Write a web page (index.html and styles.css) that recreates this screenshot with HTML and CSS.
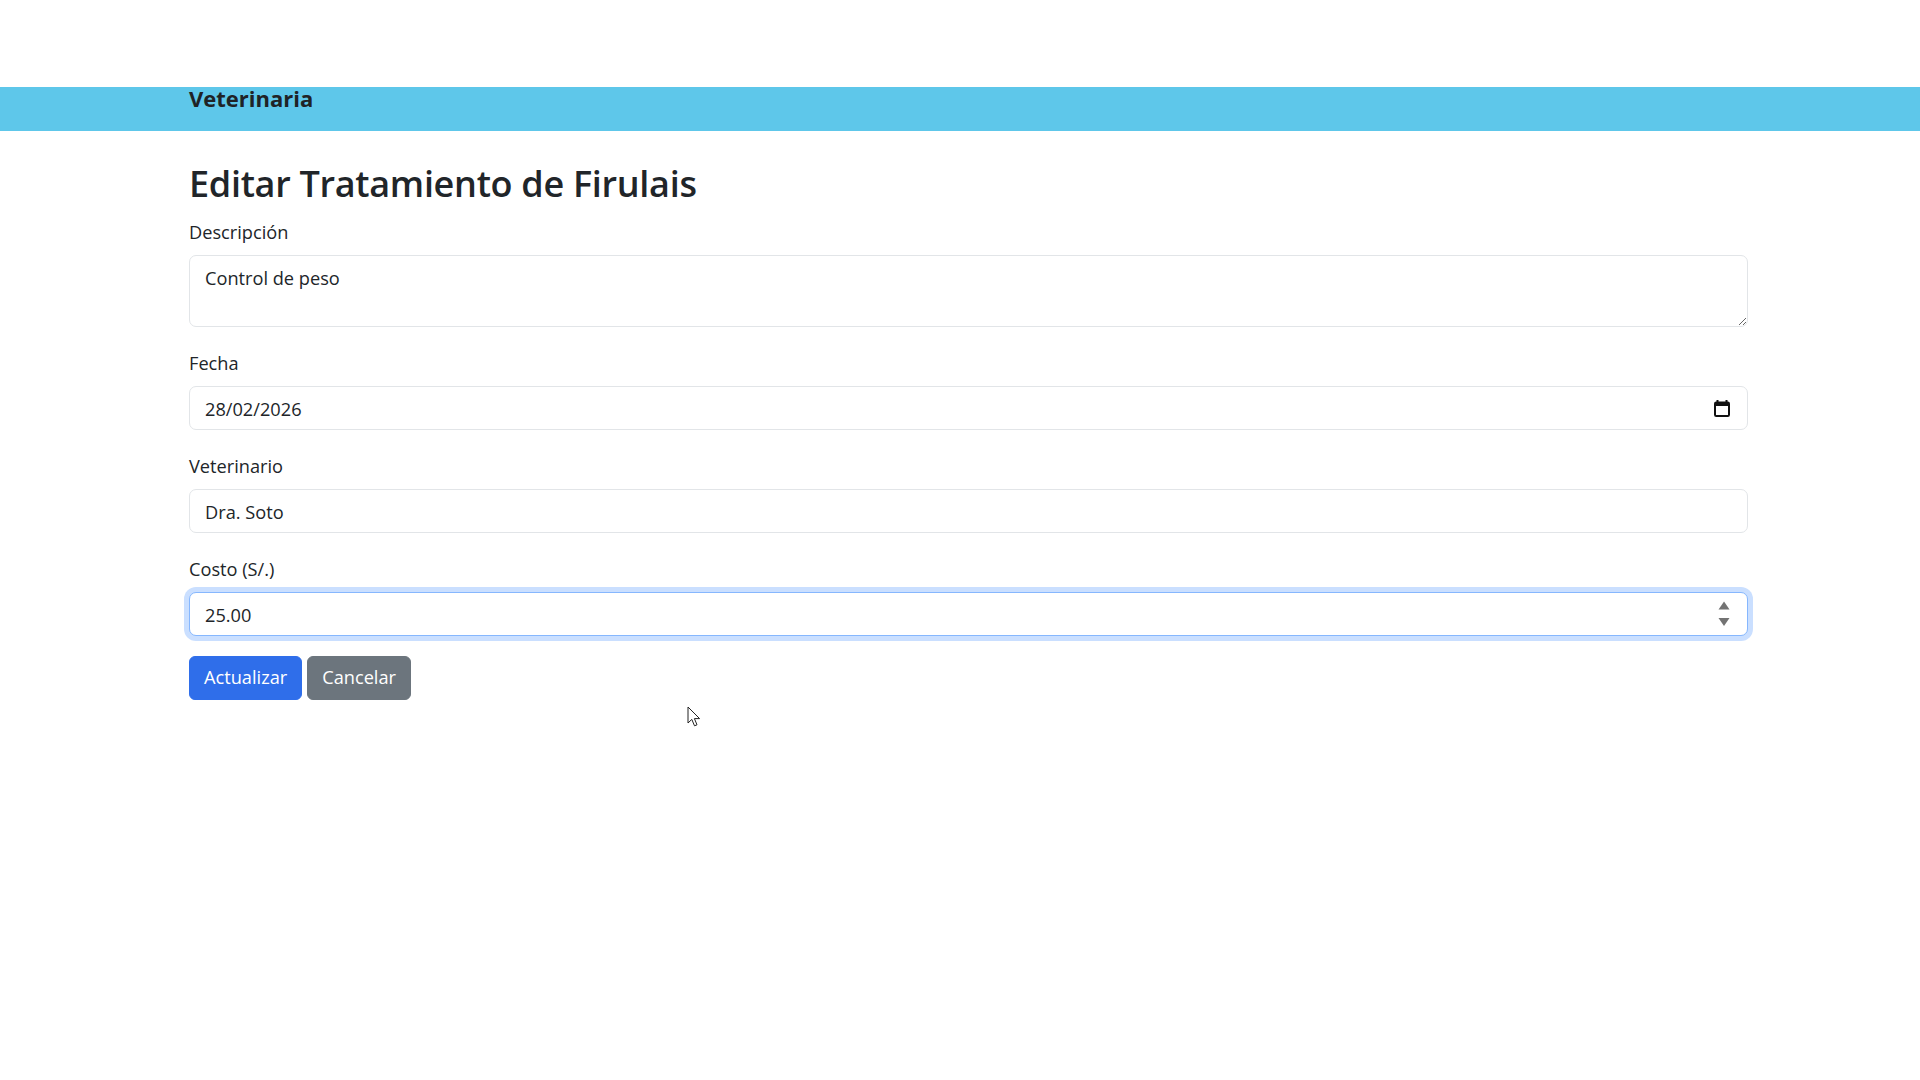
FILE: index.html
```html
<!DOCTYPE html>
<html lang="es">
<head>
<meta charset="utf-8">
<title>Editar Tratamiento</title>
<link rel="stylesheet" href="styles.css">
</head>
<body>
<nav class="navbar">
  <span class="brand">Veterinaria</span>
</nav>
<main class="container">
  <h2 class="title">Editar Tratamiento de Firulais</h2>
  <form class="form">
    <div class="group">
      <label class="label" for="desc">Descripción</label>
      <textarea class="control textarea" id="desc">Control de peso</textarea>
    </div>
    <div class="group">
      <label class="label" for="fecha">Fecha</label>
      <div class="field">
        <input class="control" id="fecha" type="text" value="28/02/2026">
        <svg class="cal-icon" width="16" height="18" viewBox="0 0 16 18" aria-hidden="true">
          <rect x="1" y="3.5" width="14" height="13.5" rx="1.2" fill="none" stroke="#111" stroke-width="2"/>
          <rect x="1" y="3.5" width="14" height="3.5" fill="#111"/>
          <rect x="2.5" y="1" width="2" height="3" fill="#111"/>
          <rect x="11.5" y="1" width="2" height="3" fill="#111"/>
        </svg>
      </div>
    </div>
    <div class="group">
      <label class="label" for="vet">Veterinario</label>
      <input class="control" id="vet" type="text" value="Dra. Soto">
    </div>
    <div class="group">
      <label class="label" for="costo">Costo (S/.)</label>
      <div class="field">
        <input class="control focused" id="costo" type="text" value="25.00">
        <svg class="spin-icon" width="12" height="26" viewBox="0 0 12 26" aria-hidden="true">
          <path d="M6 0.5 L11.5 8.5 L0.5 8.5 Z" fill="#737373"/>
          <path d="M0.5 17 L11.5 17 L6 25 Z" fill="#737373"/>
        </svg>
      </div>
    </div>
    <div class="actions">
      <button type="button" class="btn btn-primary">Actualizar</button>
      <button type="button" class="btn btn-secondary">Cancelar</button>
    </div>
  </form>
</main>
<svg class="cursor" width="14" height="22" viewBox="0 0 14 22" aria-hidden="true">
  <path d="M1 1 L1 17 L4.8 13.4 L7.5 19.8 L10 18.8 L7.4 12.6 L12.6 12.6 Z" fill="#fff" stroke="#222" stroke-width="1" stroke-linejoin="round"/>
</svg>
</body>
</html>
```
FILE: styles.css
```css
* { box-sizing: border-box; }

html, body {
  margin: 0;
  background: #ffffff;
}

body {
  padding-top: 87px;
  font-family: "Open Sans", "Noto Sans", sans-serif;
  font-size: 18.2px;
  color: #212529;
  position: relative;
  min-height: 1080px;
}

.navbar {
  height: 44px;
  background: #5ec7ea;
  padding: 1px 0 0 189px;
}

.brand {
  display: block;
  font-size: 22px;
  font-weight: 700;
  line-height: 20px;
  color: #1f2326;
}

.container {
  width: 1748px;
  padding-left: 189px;
}

.title {
  margin: 29px 0 9px;
  font-size: 36px;
  font-weight: 600;
  letter-spacing: -0.3px;
  line-height: 48px;
  color: #212529;
}

.form {
  display: flex;
  flex-direction: column;
}

.group {
  display: flex;
  flex-direction: column;
  margin-bottom: 21px;
}

.label {
  display: block;
  line-height: 30px;
  margin-bottom: 8px;
}

.field {
  position: relative;
}

.control {
  display: block;
  width: 100%;
  height: 44px;
  padding: 7px 15px 5px;
  font-family: inherit;
  font-size: 18.2px;
  line-height: 30px;
  color: #212529;
  background: #fff;
  border: 1px solid #e2e5e8;
  border-radius: 7px;
  outline: none;
}

.textarea {
  height: 72px;
  resize: vertical;
  padding-top: 7px;
}

.focused {
  border-color: #86b7fe;
  box-shadow: 0 0 0 5px rgba(13, 110, 253, 0.22);
}

.cal-icon {
  position: absolute;
  top: 13px;
  right: 18px;
}

.spin-icon {
  position: absolute;
  top: 9px;
  right: 18px;
}

.actions {
  display: flex;
  gap: 5px;
  margin-top: -1px;
}

.btn {
  height: 44px;
  padding: 5px 14px 7px;
  font-family: inherit;
  font-size: 18.2px;
  line-height: 30px;
  border-radius: 6px;
  border: 1px solid transparent;
  color: #fff;
}

.btn-primary {
  background: #2f6eea;
  border-color: #2f6eea;
}

.btn-secondary {
  background: #6c757d;
  border-color: #6c757d;
}

.cursor {
  position: absolute;
  left: 687px;
  top: 706px;
}
```
